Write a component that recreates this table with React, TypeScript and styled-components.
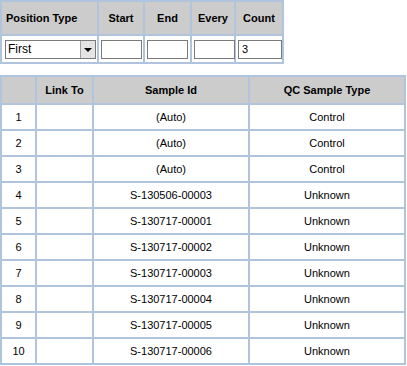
import React, { useState } from 'react';
import styled, { createGlobalStyle } from 'styled-components';

const GlobalStyle = createGlobalStyle`
  body {
    margin: 0;
    background: #fff;
    font-family: "Liberation Sans", Arial, sans-serif;
    font-size: 11px;
    color: #000;
  }
`;

const Grid = styled.table`
  border-collapse: separate;
  border-spacing: 2px;
  background: #b0c4de;
  font-family: "Liberation Sans", Arial, sans-serif;
  font-size: 11px;
  table-layout: fixed;
`;

const PositionGrid = styled(Grid)`
  width: 284px;
  margin-bottom: 11px;
`;

const SampleGrid = styled(Grid)`
  width: 406px;
`;

const HeadCell = styled.th<{ $align?: 'left' | 'center' }>`
  background: #cccccc;
  font-weight: bold;
  text-align: ${p => p.$align || 'center'};
  padding: 0 4px;
  white-space: nowrap;
  color: #000;
`;

const TopHead = styled(HeadCell)`
  height: 32px;
`;

const SampleHead = styled(HeadCell)`
  height: 26px;
`;

const InputCell = styled.td`
  background: #fff;
  height: 26px;
  padding: 0 1px 0 2px;
  vertical-align: middle;
`;

const Cell = styled.td`
  background: #fff;
  height: 24px;
  padding: 0;
  text-align: center;
  vertical-align: middle;
  white-space: nowrap;
`;

const TextBox = styled.input`
  box-sizing: border-box;
  width: 41px;
  height: 19px;
  margin: 0;
  border: 1px solid #7a7a7a;
  padding: 0 3px;
  font: 11px "Liberation Sans", Arial, sans-serif;
  color: #000;
  background: #fff;
  outline: none;
  display: block;
`;

const CountBox = styled(TextBox)`
  width: 44px;
`;

const SelectWrap = styled.div`
  position: relative;
  box-sizing: border-box;
  width: 91px;
  height: 19px;
  margin-left: 1px;
  border: 1px solid #7a7a7a;
  background: #fff;
  display: flex;
`;

const Select = styled.select`
  appearance: none;
  flex: 1;
  min-width: 0;
  border: none;
  margin: 0;
  padding: 0 0 0 2px;
  font: 12px "Liberation Sans", Arial, sans-serif;
  color: #000;
  background: transparent;
  outline: none;
`;

const DropButton = styled.span`
  width: 14px;
  border-left: 1px solid #a0a0a0;
  background: #e4e4e4;
  display: flex;
  align-items: center;
  justify-content: center;
  pointer-events: none;
`;

const Arrow = styled.span`
  width: 0;
  height: 0;
  border-left: 4px solid transparent;
  border-right: 4px solid transparent;
  border-top: 4px solid #000;
  margin-top: 1px;
`;

const samples: [string, string][] = [
  ['(Auto)', 'Control'],
  ['(Auto)', 'Control'],
  ['(Auto)', 'Control'],
  ['S-130506-00003', 'Unknown'],
  ['S-130717-00001', 'Unknown'],
  ['S-130717-00002', 'Unknown'],
  ['S-130717-00003', 'Unknown'],
  ['S-130717-00004', 'Unknown'],
  ['S-130717-00005', 'Unknown'],
  ['S-130717-00006', 'Unknown'],
];

const App: React.FC = () => {
  const [position, setPosition] = useState('First');
  const [count, setCount] = useState('3');

  return (
    <>
      <GlobalStyle />
      <PositionGrid>
        <colgroup>
          <col style={{ width: 95 }} />
          <col style={{ width: 44 }} />
          <col style={{ width: 45 }} />
          <col style={{ width: 42 }} />
          <col style={{ width: 46 }} />
        </colgroup>
        <thead>
          <tr>
            <TopHead $align="left">Position Type</TopHead>
            <TopHead>Start</TopHead>
            <TopHead>End</TopHead>
            <TopHead>Every</TopHead>
            <TopHead>Count</TopHead>
          </tr>
        </thead>
        <tbody>
          <tr>
            <InputCell>
              <SelectWrap>
                <Select value={position} onChange={e => setPosition(e.target.value)}>
                  <option>First</option>
                  <option>Last</option>
                  <option>Every</option>
                </Select>
                <DropButton><Arrow /></DropButton>
              </SelectWrap>
            </InputCell>
            <InputCell><TextBox /></InputCell>
            <InputCell><TextBox /></InputCell>
            <InputCell><TextBox /></InputCell>
            <InputCell><CountBox value={count} onChange={e => setCount(e.target.value)} /></InputCell>
          </tr>
        </tbody>
      </PositionGrid>

      <SampleGrid>
        <colgroup>
          <col style={{ width: 33 }} />
          <col style={{ width: 55 }} />
          <col style={{ width: 154 }} />
          <col style={{ width: 154 }} />
        </colgroup>
        <thead>
          <tr>
            <SampleHead />
            <SampleHead>Link To</SampleHead>
            <SampleHead>Sample Id</SampleHead>
            <SampleHead>QC Sample Type</SampleHead>
          </tr>
        </thead>
        <tbody>
          {samples.map(([id, type], i) => (
            <tr key={i}>
              <Cell>{i + 1}</Cell>
              <Cell />
              <Cell>{id}</Cell>
              <Cell>{type}</Cell>
            </tr>
          ))}
        </tbody>
      </SampleGrid>
    </>
  );
};

export default App;
